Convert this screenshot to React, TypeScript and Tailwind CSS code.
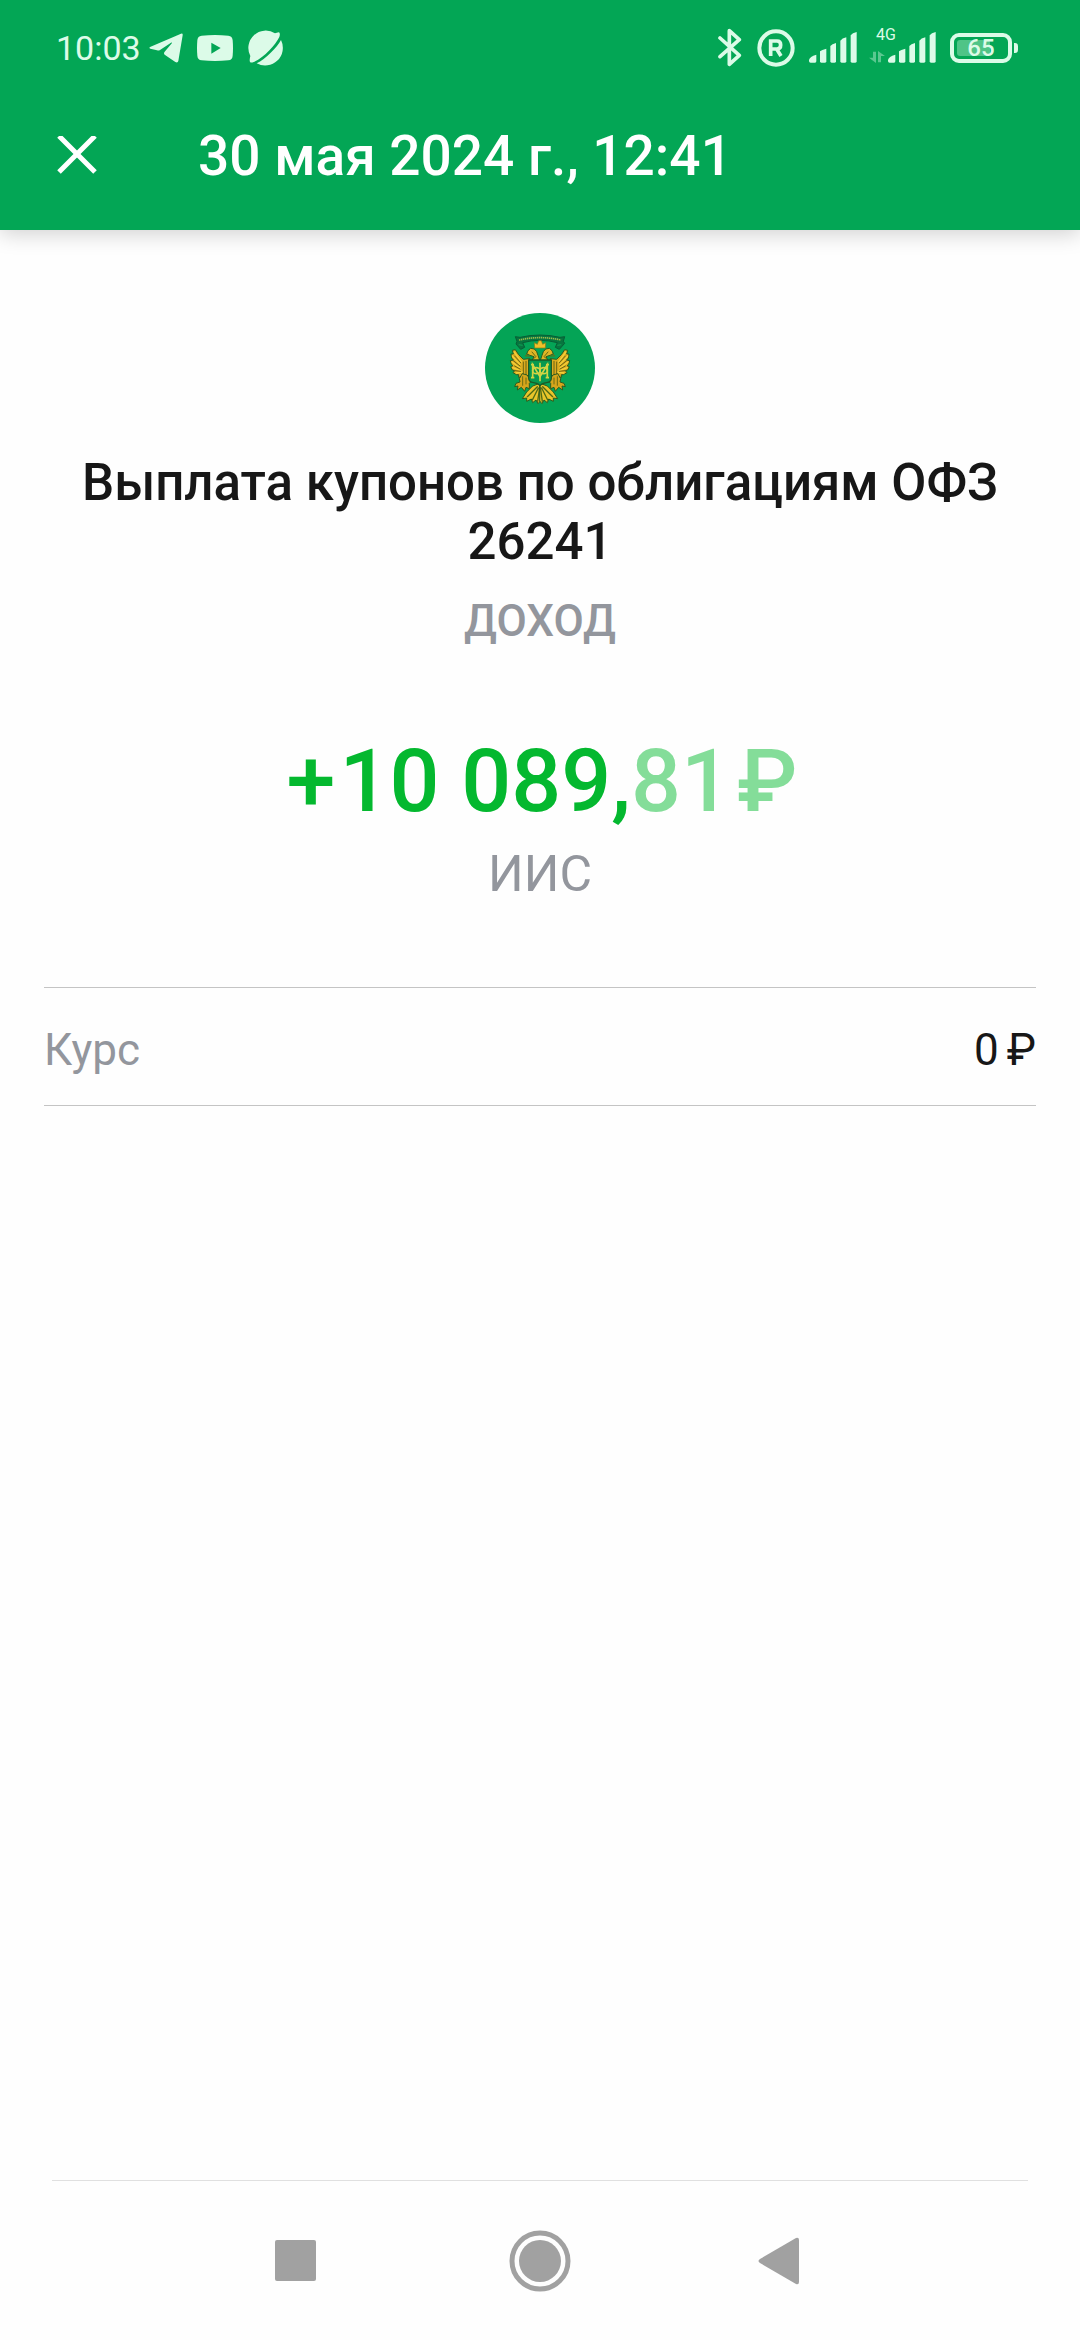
import React from 'react';

function TelegramIcon() {
  return (
    <svg className="w-[34px] h-[30px]" viewBox="0 0 102 90" fill="currentColor" aria-hidden="true">
      <path d="M3 42 L96 2 Q102 0 101 7 L88 84 Q86 91 79 87 L47 65 Q43 61 47 56 L69 30 Q70 27 66 29 L33 51 Q29 54 24 52 L4 47 Q-1 45 3 42 Z" />
    </svg>
  );
}

function YoutubeIcon() {
  return (
    <svg className="w-[36px] h-[26px]" viewBox="0 0 108 78" fill="currentColor" fillRule="evenodd" aria-hidden="true">
      <path d="M14 2 Q54 -2 94 2 Q106 3 107 16 Q109 39 107 62 Q106 75 94 76 Q54 80 14 76 Q2 75 1 62 Q-1 39 1 16 Q2 3 14 2 Z M43 23 V56 L71 39 Z" />
    </svg>
  );
}

function PlanetIcon() {
  return (
    <svg className="w-[36px] h-[36px]" viewBox="0 0 108 108" fill="currentColor" aria-hidden="true">
      <path d="M10 97 Q6 94 10 78 A52 52 0 0 1 84 10 L95 7 Q101 8 97 21 C86 44 52 82 22 95 Q12 99 10 97 Z" />
      <path d="M102 30 A53 53 0 0 1 29 100 C56 87 90 52 102 30 Z" />
    </svg>
  );
}

function BluetoothIcon() {
  return (
    <svg
      className="w-[24px] h-[39px]"
      viewBox="0 0 72 117"
      fill="none"
      stroke="currentColor"
      strokeWidth="11"
      strokeLinejoin="round"
      strokeLinecap="round"
      aria-hidden="true"
    >
      <path d="M6 30 L64 82 L34 109 V8 L64 35 L6 86" />
    </svg>
  );
}

function RegisteredIcon() {
  return (
    <svg className="w-[38px] h-[38px]" viewBox="0 0 114 114" fill="none" stroke="currentColor" aria-hidden="true">
      <circle cx="57" cy="57" r="50" strokeWidth="12" />
      <path d="M41 81 V36 H60 Q71 36 71 48 Q71 60 60 60 H41 M59 60 L72 81" strokeWidth="11" />
    </svg>
  );
}

function SignalIcon() {
  return (
    <svg className="w-[48px] h-[31px]" viewBox="0 0 144 93" fill="currentColor" aria-hidden="true">
      <path d="M0 84 Q2 74 22 68 V88 Q22 92 18 92 H5 Q0 92 0 87 Z" />
      <path d="M33 58 Q38 53 52 50 V88 Q52 92 48 92 H37 Q33 92 33 88 Z" />
      <path d="M64 42 Q69 36 81 33 V88 Q81 92 77 92 H68 Q64 92 64 88 Z" />
      <path d="M94 26 Q99 19 112 16 V88 Q112 92 108 92 H98 Q94 92 94 88 Z" />
      <path d="M125 10 Q130 3 143 0 V88 Q143 92 139 92 H129 Q125 92 125 88 Z" />
    </svg>
  );
}

function DataArrowsIcon() {
  return (
    <svg className="w-[16px] h-[12px] opacity-40" viewBox="0 0 48 36" fill="currentColor" aria-hidden="true">
      <path d="M12 2 H21 V36 L0 20 H12 Z M27 0 L48 15 H36 V34 H27 Z" />
    </svg>
  );
}

function StatusBar() {
  return (
    <div className="flex items-center justify-between h-[95px] pl-[56px] pr-[62px] text-[#dcfbe8]">
      <div className="flex items-center">
        <span className="text-[34px] leading-[40px] mr-2">10:03</span>
        <TelegramIcon />
        <span className="w-[14px]" />
        <YoutubeIcon />
        <span className="w-[14px]" />
        <PlanetIcon />
      </div>
      <div className="flex items-center">
        <BluetoothIcon />
        <span className="w-[15px]" />
        <RegisteredIcon />
        <span className="w-[14px]" />
        <SignalIcon />
        <div className="flex items-end ml-3 relative">
          <span className="absolute left-[7px] -top-[5px] text-[16px] leading-[16px]">4G</span>
          <DataArrowsIcon />
          <span className="w-[3px]" />
          <SignalIcon />
        </div>
        <div className="flex items-center ml-[14px] gap-[2px]">
          <div className="relative flex items-center justify-center w-[62px] h-[30px] rounded-[9px] border-4 border-current">
            <div className="absolute left-[3px] inset-y-[3px] w-[33px] rounded-[3px] bg-[#4fc487]" />
            <span className="relative text-[24px] leading-[24px] font-medium">65</span>
          </div>
          <div className="w-[4px] h-[10px] rounded-r-[3px] bg-current" />
        </div>
      </div>
    </div>
  );
}

// One half of the eagle, mirrored for the other side
function EagleHalf() {
  return (
    <g strokeLinejoin="round" strokeLinecap="round">
      {/* Wing */}
      <path
        d="M178 176 L160 178 L146 164 L136 149 L127 151 L130 162 L123 162 L125 174 L130 180 L121 182 L124 193 L129 197 L122 200 L127 210 L134 212 L129 218 L140 224 L146 224 L146 232 L158 230 L168 240 L178 226 Z"
        fill="#dcab1f"
        stroke="#2b5b1f"
        strokeWidth="3"
      />
      <path
        d="M133 156 L154 186 M127 168 L150 194 M126 186 L150 204 M128 203 L152 212 M138 219 L158 216"
        stroke="#f3d03a"
        strokeWidth="4"
        fill="none"
      />
      <path
        d="M134 168 L152 188 M130 182 L150 198 M134 198 L150 207 M136 212 L152 214 M160 186 V222 M168 184 V230"
        stroke="#6b6512"
        strokeWidth="3"
        fill="none"
      />
      {/* Head and neck */}
      <path
        d="M204 184 L186 182 L192 170 L180 166 L170 162 L174 152 L182 145 L193 147 L200 155 L204 166 L210 184 Z"
        fill="#dfb525"
        stroke="#2b5b1f"
        strokeWidth="3"
      />
      <path d="M172 162 L166 168 L180 168 M186 156 L196 168 M190 176 L198 170" stroke="#6b6c12" strokeWidth="3" fill="none" />
      {/* Claw */}
      <path
        d="M156 222 L148 236 L150 246 L138 250 L134 260 L144 258 L142 270 L154 262 L164 274 L168 262 L178 266 L178 250 L184 244 L172 226 Z"
        fill="#d6a51c"
        stroke="#2b5b1f"
        strokeWidth="3"
      />
      <path d="M158 230 L158 256 M168 234 L168 252" stroke="#6b6c12" strokeWidth="3" fill="none" />
      {/* Tail */}
      <path
        d="M210 250 L188 258 L170 276 L157 296 L170 294 L170 304 L184 297 L188 308 L198 300 L204 311 L210 304 Z"
        fill="#e9c42a"
        stroke="#2b5b1f"
        strokeWidth="3"
      />
      <path d="M202 260 L172 290 M205 264 L187 300 M209 262 L203 304" stroke="#4d6a16" strokeWidth="4" fill="none" />
    </g>
  );
}

function Emblem() {
  return (
    <svg className="w-[110px] h-[110px]" viewBox="45 39 330 330" role="img" aria-label="Минфин">
      <circle cx="210" cy="204" r="165" fill="#04a456" />
      <EagleHalf />
      <g transform="translate(420 0) scale(-1 1)">
        <EagleHalf />
      </g>
      {/* Ribbon */}
      <path
        d="M136 110 L150 112 Q210 98 270 112 L284 110 L280 124 L284 130 L268 148 L256 142 L262 128 Q210 114 158 128 L164 142 L152 148 L138 132 L141 124 Z"
        fill="#08753f"
        stroke="#075f35"
        strokeWidth="3"
      />
      <path d="M147 120 Q210 106 273 120" fill="none" stroke="#9cb94b" strokeWidth="5" strokeDasharray="4 2" />
      <path d="M146 134 L158 136 M274 134 L262 136" stroke="#0c9a50" strokeWidth="4" />
      {/* Crown */}
      <path d="M194 144 L193 128 L202 133 L206 122 H214 L218 133 L227 128 L226 144 Z" fill="#efc02a" stroke="#8b7a12" strokeWidth="2" />
      {/* Shield */}
      <path d="M176 180 H244 V234 Q244 246 230 248 Q214 250 210 258 Q206 250 190 248 Q176 246 176 234 Z" fill="#07994f" stroke="#1d5a26" strokeWidth="4" />
      {/* Monogram */}
      <g fill="none" stroke="#d2d444" strokeWidth="5">
        <path d="M188 232 V194 L210 230 L232 194 V232 M183 194 H192 M228 194 H237 M183 233 H193 M227 233 H237" />
        <path d="M210 188 V244" />
        <ellipse cx="199" cy="212" rx="11" ry="9" />
        <ellipse cx="221" cy="212" rx="11" ry="9" />
      </g>
    </svg>
  );
}

function Header() {
  return (
    <header className="bg-[#03a655] shadow-[0_4px_20px_rgba(0,0,0,0.18)]">
      <StatusBar />
      <div className="flex items-center h-[135px] pl-[57px] pb-[14px]">
        <button type="button" aria-label="Закрыть" className="text-white">
          <svg className="w-[40px] h-[40px]" viewBox="0 0 40 40" fill="none" stroke="currentColor" strokeWidth="5">
            <path d="M2 0 L38 36 M38 0 L2 36" />
          </svg>
        </button>
        <h1 className="ml-[101px] text-[55px] leading-[64px] font-medium text-white">30 мая 2024 г., 12:41</h1>
      </div>
    </header>
  );
}

function NavigationBar() {
  return (
    <nav className="mx-[52px] border-t border-[#e0e0e0] h-[160px] flex items-center justify-center gap-[180px] text-[#a1a1a1]">
      <button type="button" aria-label="Недавние">
        <svg className="w-16 h-16" viewBox="0 0 64 64" fill="currentColor">
          <rect x="11" y="11" width="41" height="41" rx="2" />
        </svg>
      </button>
      <button type="button" aria-label="Домой">
        <svg className="w-16 h-16" viewBox="0 0 64 64" fill="currentColor">
          <circle cx="32" cy="32" r="28" fill="none" stroke="currentColor" strokeWidth="5" />
          <circle cx="32" cy="32" r="21" />
        </svg>
      </button>
      <button type="button" aria-label="Назад">
        <svg className="w-16 h-16" viewBox="0 0 64 64" fill="currentColor">
          <path d="M8 30 L44 9 Q47 8 47 11 V53 Q47 56 44 55 L8 34 Q5 32 8 30 Z" />
        </svg>
      </button>
    </nav>
  );
}

export default function App() {
  return (
    <div className="min-h-screen flex flex-col bg-[#fefefe] font-['Roboto',sans-serif]">
      <Header />

      <main className="flex-1 px-[44px] pt-[83px]">
        <section className="flex flex-col items-center text-center">
          <Emblem />
          <h2 className="mt-[30px] px-6 text-[51px] leading-[59px] font-medium text-[#171717]">
            Выплата купонов по облигациям ОФЗ 26241
          </h2>
          <p className="mt-6 text-[44px] leading-[52px] font-medium text-[#93969d]">ДОХОД</p>
          <p className="mt-[82px] pl-1 text-[88px] leading-[104px] font-medium text-[#04b82f]">
            +<span className="ml-1">10 089,</span>
            <span className="text-[#84dd99]">
              81<span className="ml-[6px]">₽</span>
            </span>
          </p>
          <p className="mt-3 text-[50px] leading-[58px] text-[#93969d]">ИИС</p>
        </section>

        <dl className="mt-[84px] pt-[6px] flex items-center justify-between h-[119px] border-y border-[#c4c4c4] text-[44px] leading-[52px]">
          <dt className="text-[#93969d]">Курс</dt>
          <dd className="flex gap-2 text-[#171717]">
            <span>0</span>
            <span>₽</span>
          </dd>
        </dl>
      </main>

      <NavigationBar />
    </div>
  );
}
